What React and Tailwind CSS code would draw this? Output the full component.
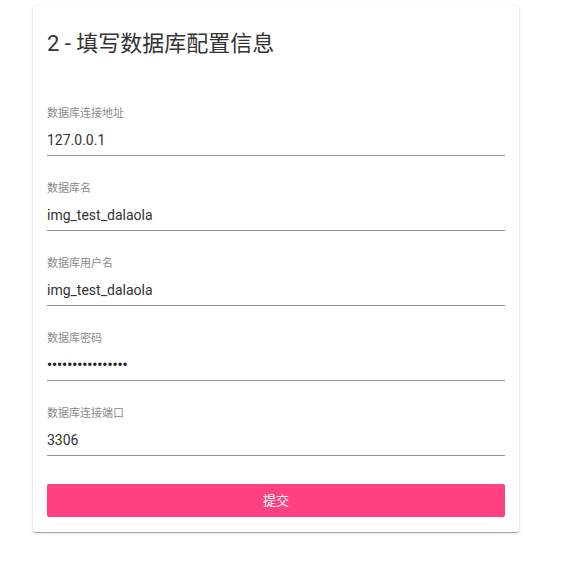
const fields = [
  { label: "数据库连接地址", value: "127.0.0.1" },
  { label: "数据库名", value: "img_test_dalaola" },
  { label: "数据库用户名", value: "img_test_dalaola" },
  { label: "数据库密码", value: "••••••••••••••••", password: true },
  { label: "数据库连接端口", value: "3306" },
];

function Field({ label, value, password }) {
  return (
    <div className="flex flex-col">
      <label className="text-[11px] leading-[16px] text-[#8a8a8a]">{label}</label>
      <div className="mt-[3px] h-[31px] flex items-center border-b border-[#949494] text-[14px] text-[#333]">
        {password ? (
          <span className="text-[14px] font-bold text-[#222]">{value}</span>
        ) : (
          <span>{value}</span>
        )}
      </div>
    </div>
  );
}

export default function App() {
  return (
    <div
      className="min-h-screen bg-white pt-[6px] pl-[33px]"
      style={{ fontFamily: 'Roboto, "Noto Sans CJK SC", sans-serif' }}
    >
      <div className="w-[486px] bg-white rounded-[2px] px-[14px] pt-[22px] pb-[15px] shadow-[0_1px_3px_rgba(0,0,0,0.2),0_1px_1px_rgba(0,0,0,0.14),0_2px_1px_-1px_rgba(0,0,0,0.12)]">
        {/* Header */}
        <h2 className="text-[22px] leading-[32px] text-[#333]">2 - 填写数据库配置信息</h2>

        {/* Fields */}
        <div className="mt-[46px] flex flex-col gap-[25px]">
          {fields.map((f) => (
            <Field key={f.label} {...f} />
          ))}
        </div>

        <button className="mt-[28px] w-full h-[33px] rounded-[2px] bg-[#ff4081] text-white text-[13px]">
          提交
        </button>
      </div>
    </div>
  );
}
